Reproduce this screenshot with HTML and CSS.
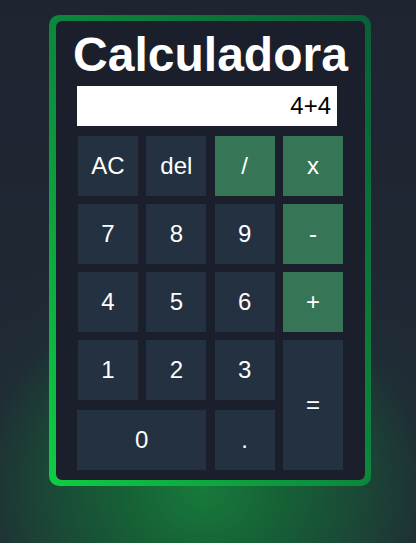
FILE: index.html
```html
<!DOCTYPE html>
<html lang="es">
<head>
<meta charset="utf-8">
<title>Calculadora</title>
<link rel="stylesheet" href="styles.css">
</head>
<body>
<div class="frame">
  <div class="calc">
    <h1 class="title">Calculadora</h1>
    <div class="display">4+4</div>
    <div class="keys">
      <button class="key">AC</button>
      <button class="key">del</button>
      <button class="key op">/</button>
      <button class="key op">x</button>
      <button class="key">7</button>
      <button class="key">8</button>
      <button class="key">9</button>
      <button class="key op">-</button>
      <button class="key">4</button>
      <button class="key">5</button>
      <button class="key">6</button>
      <button class="key op">+</button>
      <button class="key">1</button>
      <button class="key">2</button>
      <button class="key">3</button>
      <button class="key equals">=</button>
      <button class="key zero">0</button>
      <button class="key dot">.</button>
    </div>
  </div>
</div>
</body>
</html>
```

FILE: styles.css
```css
html, body {
  margin: 0;
  padding: 0;
}
body {
  width: 416px;
  height: 543px;
  overflow: hidden;
  font-family: "Liberation Sans", Arial, sans-serif;
  background:
    radial-gradient(ellipse 300px 280px at 49% 90%, #177a3b 0%, #166236 25%, #1a4a36 50%, rgba(31,46,52,0.5) 75%, rgba(31,40,52,0) 100%),
    linear-gradient(to bottom, #1f2431 0%, #1f2834 55%, #1f3036 100%);
  padding-top: 15px;
  box-sizing: border-box;
}
.frame {
  margin-left: 49px;
  width: 322px;
  height: 471px;
  box-sizing: border-box;
  padding: 6px 6px 6px 7px;
  border-radius: 10px;
  background: linear-gradient(to top right, #0fcd44 0%, #0c8c3c 45%, #0a5f37 100%);
}
.calc {
  height: 100%;
  box-sizing: border-box;
  background: #1b1e2b;
  border-radius: 6px;
  padding: 6px 0 0 21px;
}
.title {
  margin: 0 0 0 -21px;
  font-size: 48px;
  font-weight: bold;
  line-height: 55px;
  color: #ffffff;
  text-align: center;
}
.display {
  margin-top: 4px;
  width: 260px;
  height: 40px;
  box-sizing: border-box;
  background: #ffffff;
  color: #000000;
  font-size: 24px;
  line-height: 40px;
  text-align: right;
  padding-right: 6px;
}
.keys {
  margin-top: 10px;
  margin-left: 1px;
  display: grid;
  grid-template-columns: repeat(4, 60px);
  grid-template-rows: 60px 60px 60px 60px 62px;
  column-gap: 8.33px;
  row-gap: 8px;
}
.key {
  border: none;
  margin: 0;
  padding: 0;
  background: #243140;
  color: #ffffff;
  font-family: "Liberation Sans", Arial, sans-serif;
  font-size: 24px;
}
.op {
  background: #367555;
}
.equals {
  grid-column: 4;
  grid-row: 4 / span 2;
}
.zero {
  grid-column: 1 / span 2;
  grid-row: 5;
  height: 60px;
  align-self: end;
  margin-left: -1px;
}
.dot {
  grid-column: 3;
  grid-row: 5;
  height: 60px;
  align-self: end;
}
```
